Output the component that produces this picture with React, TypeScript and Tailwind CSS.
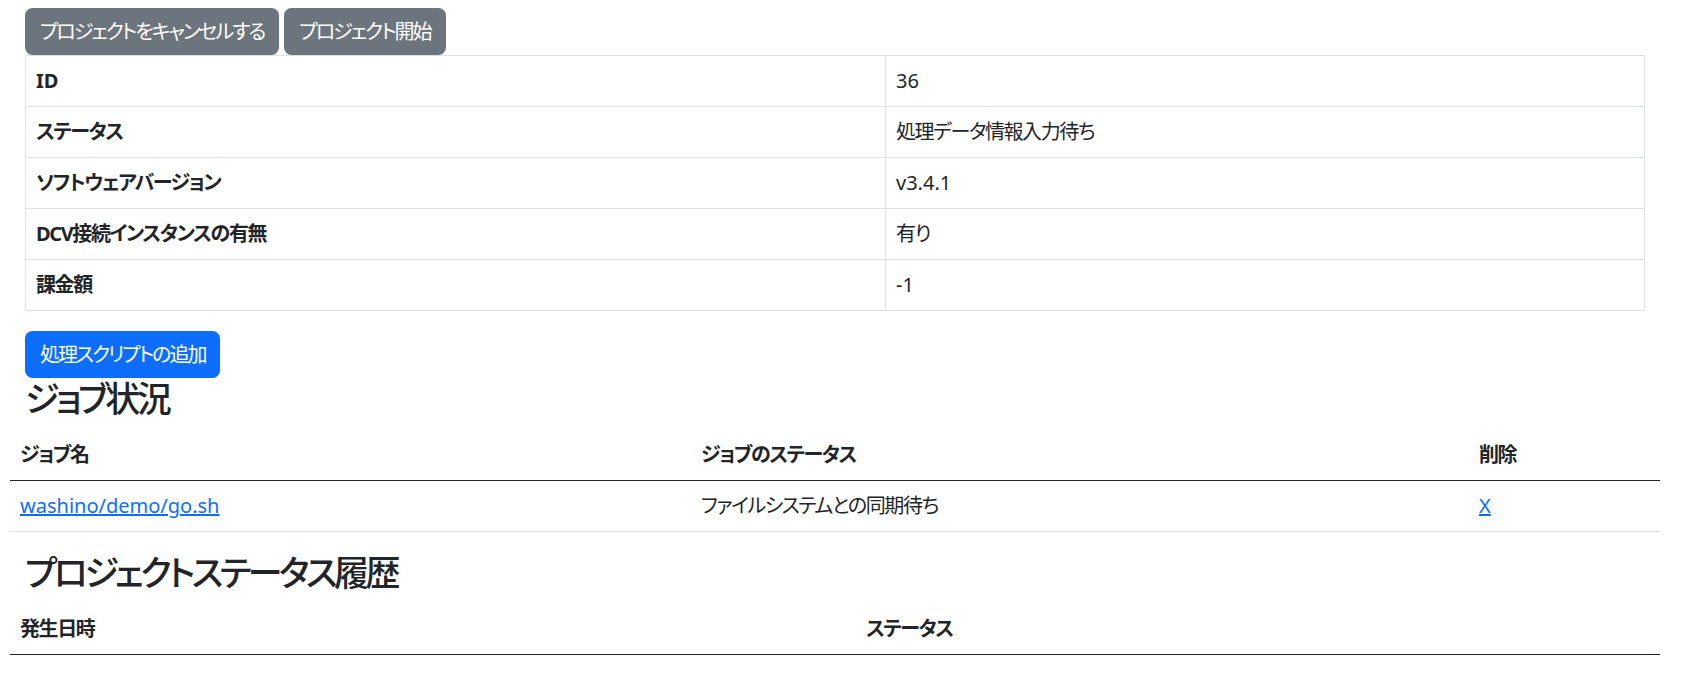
import { FC } from 'react';

const font = "font-['Segoe_UI','Noto_Sans','Noto_Sans_CJK_JP',sans-serif] [font-feature-settings:'palt']";

// latin: true keeps normal tracking for values without Japanese text
const projectInfo: { label: string; value: string; latinLabel?: boolean; latinValue?: boolean }[] = [
  { label: 'ID', value: '36', latinLabel: true, latinValue: true },
  { label: 'ステータス', value: '処理データ情報入力待ち' },
  { label: 'ソフトウェアバージョン', value: 'v3.4.1', latinValue: true },
  { label: 'DCV接続インスタンスの有無', value: '有り' },
  { label: '課金額', value: '-1', latinValue: true },
];

const App: FC = () => {
  return (
    <div className={`min-h-screen bg-white text-[#212529] text-[20px] leading-[1.5] tracking-[-0.07em] ${font}`}>
      <div className="flex gap-[5px] pt-2 pl-[25px]">
        <button className="h-[47px] rounded-[7.5px] bg-[#6c757d] px-[15px] text-white tracking-[-0.1em]">
          プロジェクトをキャンセルする
        </button>
        <button className="h-[47px] rounded-[7.5px] bg-[#6c757d] px-[15px] text-white tracking-[-0.1em]">
          プロジェクト開始
        </button>
      </div>

      <table className="ml-[25px] w-[1620px] border-collapse border border-[#dee2e6]">
        <tbody>
          {projectInfo.map((row) => (
            <tr key={row.label} className="border-b border-[#dee2e6]">
              <th
                className={`w-[860px] border-r border-[#dee2e6] px-[10px] py-[10px] text-left font-bold ${
                  row.latinLabel ? 'tracking-normal' : ''
                }`}
              >
                {row.label}
              </th>
              <td className={`px-[10px] py-[10px] ${row.latinValue ? 'tracking-normal' : ''}`}>{row.value}</td>
            </tr>
          ))}
        </tbody>
      </table>

      <div className="pl-[25px] pt-5">
        <button className="h-[47px] rounded-[7.5px] bg-[#0d6efd] px-[15px] text-white tracking-[-0.1em]">
          処理スクリプトの追加
        </button>
        <h3 className="mb-[10px] text-[35px] font-medium leading-[1.2] tracking-[-0.1em]">ジョブ状況</h3>
      </div>

      <table className="ml-[10px] w-[1650px] border-collapse">
        <thead>
          <tr className="border-b border-[#212529]">
            <th className="w-[681px] px-[10px] py-[10px] text-left font-bold">ジョブ名</th>
            <th className="w-[778px] px-[10px] py-[10px] text-left font-bold">ジョブのステータス</th>
            <th className="px-[10px] py-[10px] text-left font-bold">削除</th>
          </tr>
        </thead>
        <tbody>
          <tr className="border-b border-[#dee2e6]">
            <td className="px-[10px] py-[10px] tracking-normal">
              <a href="#" className="text-[#0d6efd] underline">washino/demo/go.sh</a>
            </td>
            <td className="px-[10px] py-[10px]">ファイルシステムとの同期待ち</td>
            <td className="px-[10px] py-[10px] tracking-normal">
              <a href="#" className="text-[#0d6efd] underline">X</a>
            </td>
          </tr>
        </tbody>
      </table>

      <h3 className="mt-5 mb-[10px] pl-[25px] text-[35px] font-medium leading-[1.2] tracking-[-0.1em]">
        プロジェクトステータス履歴
      </h3>

      <table className="ml-[10px] w-[1650px] border-collapse">
        <thead>
          <tr className="border-b border-[#212529]">
            <th className="w-[846px] px-[10px] py-[10px] text-left font-bold">発生日時</th>
            <th className="px-[10px] py-[10px] text-left font-bold">ステータス</th>
          </tr>
        </thead>
        <tbody />
      </table>
    </div>
  );
};

export default App;
